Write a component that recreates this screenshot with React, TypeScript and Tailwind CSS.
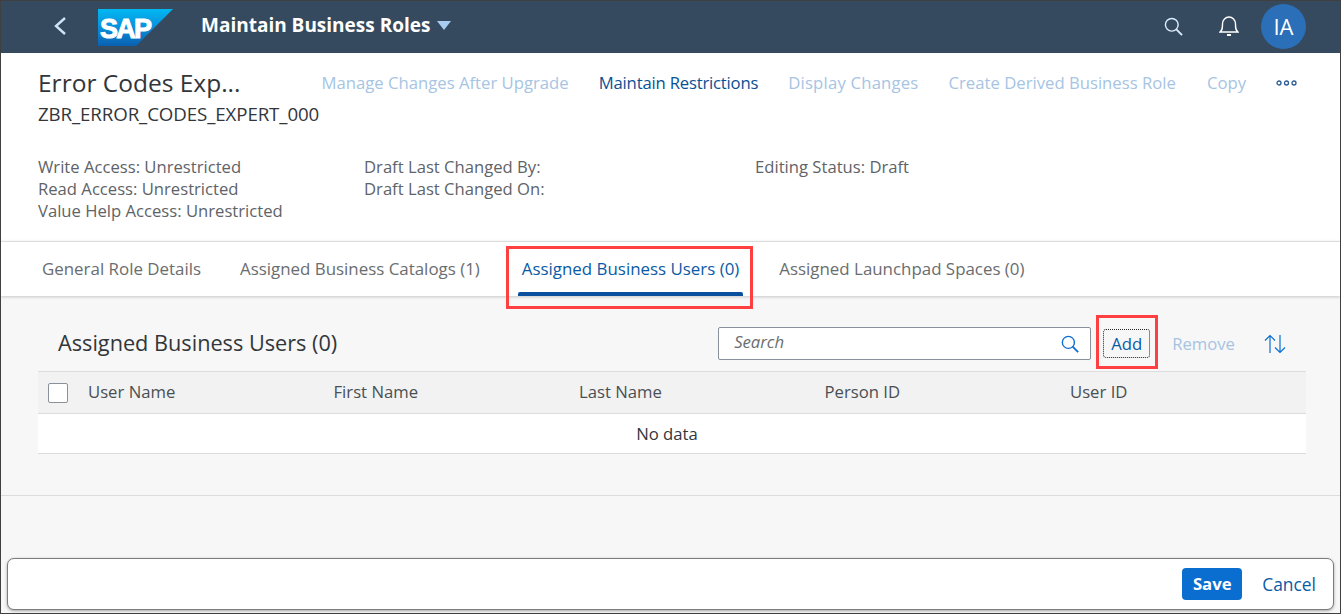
import React from "react";

const font = "font-['Open_Sans','Noto_Sans',sans-serif]";

function Logo() {
  return (
    <svg width="75" height="37" viewBox="0 0 75 37" className="block">
      <defs>
        <linearGradient id="sapg" x1="0" y1="0" x2="0" y2="1">
          <stop offset="0" stopColor="#00b8f1" />
          <stop offset="0.5" stopColor="#0a8fdc" />
          <stop offset="1" stopColor="#0a60b0" />
        </linearGradient>
      </defs>
      <polygon points="0,0 75,0 38,37 0,37" fill="url(#sapg)" />
      <text x="2" y="29" fill="#fff" stroke="#fff" strokeWidth="1" fontFamily="'Liberation Sans',sans-serif" fontWeight="700" fontSize="27" letterSpacing="-1.800">SAP</text>
    </svg>
  );
}

function SearchIcon({ color, size }: { color: string; size: number }) {
  return (
    <svg width={size} height={size} viewBox="0 0 20 20" fill="none" stroke={color} strokeWidth="1.5">
      <circle cx="8.2" cy="8.2" r="6.7" />
      <path d="M13 13l6 6" strokeWidth="2" />
    </svg>
  );
}

function Th({ children }: { children: React.ReactNode }) {
  return <div className="w-[245.500px] shrink-0 text-[#4a4f54]">{children}</div>;
}

export default function App() {
  return (
    <div className={`relative w-[1341px] h-[614px] overflow-hidden border border-[#404040] bg-[#f7f7f7] flex flex-col ${font} text-[16.700px]`}>
      <header className="h-[52px] shrink-0 bg-[#354a5f] flex items-center pl-[52px] pr-[34px]">
        <svg width="14" height="20" viewBox="0 0 14 20" fill="none" stroke="#cfe3f5" strokeWidth="2.4" className="-mt-[2px]">
          <path d="M12 2L3 10l9 8" />
        </svg>
        <div className="ml-[31px]"><Logo /></div>
        <div className="ml-[28px] -mt-[3px] text-white font-bold text-[19px]">Maintain Business Roles</div>
        <svg width="14" height="9" viewBox="0 0 14 9" className="ml-[7px] -mt-[3px]"><polygon points="0,0 14,0 7,9" fill="#a9cdf0" /></svg>
        <div className="ml-auto flex items-center -mt-[2px]">
          <SearchIcon color="#dcecfb" size={19} />
          <svg width="20" height="22" viewBox="0 0 20 22" fill="none" stroke="#fff" strokeWidth="1.4" className="ml-[36px]">
            <path d="M1 17c2.500-2 2.500-4 2.500-8 0-4 3-7 6.500-7s6.500 3 6.500 7c0 4 0 6 2.500 8z" />
            <path d="M8 20h4" strokeWidth="2" />
          </svg>
          <div className="ml-[22px] w-[45px] h-[45px] rounded-full bg-[#2a6fb8] text-white text-[22px] flex items-center justify-center">IA</div>
        </div>
      </header>

      <section className="h-[188px] shrink-0 bg-white pl-[37px] pr-[43px] pt-[14px]">
        <div className="flex items-start justify-between">
          <div>
            <div className="text-[24.500px] leading-[32px] text-[#32363a]">Error Codes Exp...</div>
            <div className="text-[18.700px] leading-[30px] text-[#32363a] -tracking-[0.1px]">ZBR_ERROR_CODES_EXPERT_000</div>
          </div>
          <div className="flex items-center leading-[32px]">
            <span className="text-[#a6c4e3]">Manage Changes After Upgrade</span>
            <span className="ml-[30px] text-[#0a4f95] -tracking-[0.2px]">Maintain Restrictions</span>
            <span className="ml-[30px] text-[#a6c4e3] tracking-[0.2px]">Display Changes</span>
            <span className="ml-[30px] text-[#a6c4e3]">Create Derived Business Role</span>
            <span className="ml-[31px] text-[#a6c4e3]">Copy</span>
            <svg width="21" height="6" viewBox="0 0 21 6" fill="none" stroke="#2b5a96" strokeWidth="1.300" className="ml-[30px]">
              <circle cx="3" cy="3" r="2" /><circle cx="10.500" cy="3" r="2" /><circle cx="18" cy="3" r="2" />
            </svg>
          </div>
        </div>
        <div className="mt-[27px] flex text-[#5e6368] leading-[22px] text-[16.650px]">
          <div className="w-[326px]">
            <div>Write Access: Unrestricted</div>
            <div>Read Access: Unrestricted</div>
            <div>Value Help Access: Unrestricted</div>
          </div>
          <div className="w-[391px]">
            <div>Draft Last Changed By:</div>
            <div>Draft Last Changed On:</div>
          </div>
          <div>Editing Status: Draft</div>
        </div>
      </section>

      <nav className="h-[55px] shrink-0 bg-white border-t border-[#dcdcdc] shadow-[0_1px_3px_rgba(0,0,0,0.2)] flex pl-[37px] text-[#6a6d70] text-[16.900px] z-10">
        <div className="px-[4px] pt-[14px]">General Role Details</div>
        <div className="ml-[31px] px-[4px] pt-[14px]">Assigned Business Catalogs (1)</div>
        <div className="ml-[34px] px-[4px] pt-[14px] relative text-[#0a5aa5]">
          Assigned Business Users (0)
          <div className="absolute left-0 right-0 bottom-0 h-[4px] rounded-t-[2px] bg-[#0a4f9e]" />
        </div>
        <div className="ml-[32px] px-[4px] pt-[14px]">Assigned Launchpad Spaces (0)</div>
      </nav>

      <main className="flex-1 flex flex-col">
        <div className="ml-[37px] mr-[34px] h-[75px] flex items-center pl-[20px] pr-[20px] pt-[20px]">
          <div className="text-[21.700px] text-[#32363a]">Assigned Business Users (0)</div>
          <div className="ml-auto w-[373px] h-[33px] bg-white border border-[#89919a] rounded-[2px] flex items-center pl-[15px] pr-[11px]">
            <span className="italic text-[#6a6d70] -mt-[3px]">Search</span>
            <span className="ml-auto"><SearchIcon color="#0a6ed1" size={18} /></span>
          </div>
          <div className="ml-[12px] w-[47px] h-[29px] rounded-[3px] border border-dotted border-[#222] flex items-center justify-center text-[#0a5aa5]">Add</div>
          <div className="ml-[22px] text-[#a6c4e3]">Remove</div>
          <svg width="22" height="20" viewBox="0 0 22 20" fill="none" stroke="#0a6ed1" strokeWidth="1.200" className="ml-[29px]">
            <path d="M6 19V1.500M1 6.500l5-5 5 5" />
            <path d="M16 1v17.500M11 13.500l5 5 5-5" />
          </svg>
        </div>

        <div className="ml-[37px] mr-[34px] h-[43px] bg-[#f2f2f2] border-y border-[#dddddd] flex items-center pl-[10px] pb-[2px] overflow-hidden">
          <div className="w-[40px] shrink-0">
            <div className="w-[20px] h-[20px] bg-white border border-[#89919a] rounded-[2px] mt-[2px]" />
          </div>
          <Th>User Name</Th>
          <Th>First Name</Th>
          <Th>Last Name</Th>
          <Th>Person ID</Th>
          <Th>User ID</Th>
        </div>
        <div className="ml-[37px] mr-[34px] h-[40px] bg-white border-b border-[#dddddd] flex items-center justify-center text-[#32363a] pr-[10px]">No data</div>
        <div className="h-[42px] border-b border-[#dcdcdc]" />
        <div className="flex-1" />
        <footer className="mx-[6px] mb-[3px] h-[52px] bg-white border border-[#7c7c7c] rounded-[7px] shadow-[0_1px_3px_rgba(0,0,0,0.35)] flex items-center justify-end pr-[17px]">
          <div className="w-[60px] h-[32px] rounded-[4px] bg-[#0a6ed1] text-white font-bold flex items-center justify-center">Save</div>
          <div className="ml-[20px] text-[#0a5aa5] text-[17.400px]">Cancel</div>
        </footer>
      </main>

      <div className="absolute z-20 left-[505px] top-[245px] w-[247px] h-[63px] border-[3px] border-[#ff4040]" />
      <div className="absolute z-20 left-[1095px] top-[314px] w-[62px] h-[54px] border-[3px] border-[#ff4040]" />
    </div>
  );
}
